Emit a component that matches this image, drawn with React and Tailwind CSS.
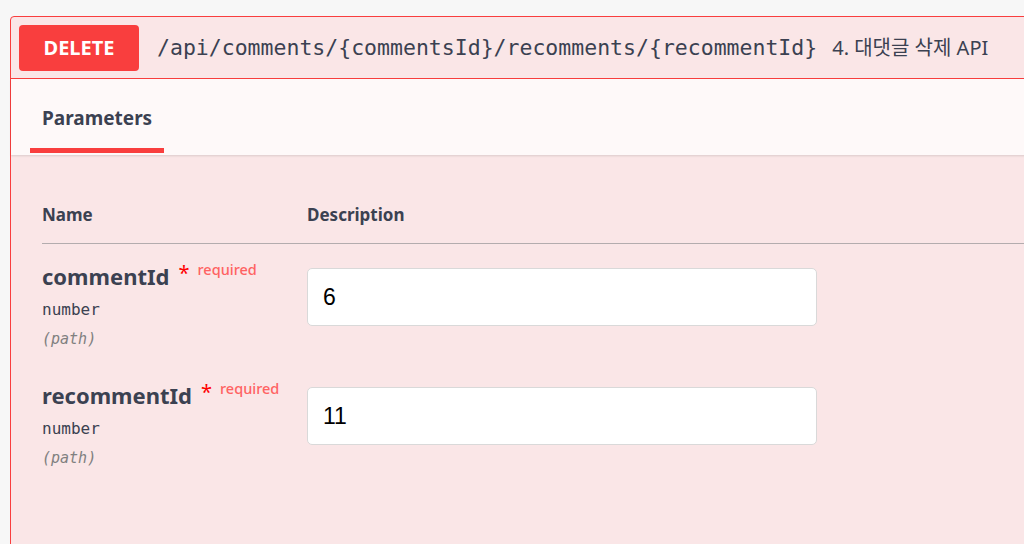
const sans = "font-['Noto_Sans','Noto_Sans_CJK_KR',sans-serif]";
const mono = "font-['DejaVu_Sans_Mono','Liberation_Mono',monospace]";

const params = [
  { name: "commentId", type: "number", place: "(path)", value: "6" },
  { name: "recommentId", type: "number", place: "(path)", value: "11" },
];

function ParamRow({ p }) {
  return (
    <div className="flex h-[119px]">
      <div className="w-[265px] shrink-0 flex flex-col">
        <div className="flex items-start">
          <span className={`${sans} text-[22px] leading-[28px] font-bold text-[#3b4151]`}>{p.name}</span>
          <span className={`${sans} ml-[9px] mt-[1px] text-[20px] leading-[20px] text-[#ff0000]`}>*</span>
          <span className={`${sans} ml-[8px] -mt-[3px] text-[14.5px] leading-[20px] font-medium text-[#ff6262]`}>required</span>
        </div>
        <div className={`${mono} mt-[10px] text-[16px] leading-[20px] text-[#3b4151]`}>{p.type}</div>
        <div className={`${mono} mt-[9px] text-[15px] leading-[20px] italic text-[#808080]`}>{p.place}</div>
      </div>
      <div className="pt-[6px]">
        <div className="w-[510px] h-[58px] bg-white border border-[#d9d9d9] rounded-[5px] flex items-center px-[15px]">
          <span className="font-['Liberation_Sans',Arial,sans-serif] text-[23px] text-black">{p.value}</span>
        </div>
      </div>
    </div>
  );
}

export default function App() {
  return (
    <div className="w-[1024px] h-[544px] overflow-hidden bg-[#f7f7f7] pt-[16px] pl-[10px]">
      <div className="w-[1030px] h-[540px] bg-[#fae6e7] border border-[#f93e3e] rounded-tl-[4px] flex flex-col">
        {/* 헤더 */}
        <div className="flex items-center h-[62px] px-[8px] pt-[1px] border-b border-[#f93e3e]">
          <div className={`${sans} w-[120px] h-[46px] rounded-[4px] bg-[#f93e3e] flex items-center justify-center text-white font-bold text-[20px]`}>
            DELETE
          </div>
          <span className={`${mono} ml-[18px] text-[21.5px] text-[#3b4151] whitespace-nowrap`}>
            /api/comments/{"{"}commentsId{"}"}/recomments/{"{"}recommentId{"}"}
          </span>
          <span className={`${sans} ml-[15px] text-[20px] text-[#3b4151] whitespace-nowrap`}>4. 대댓글 삭제 API</span>
        </div>

        {/* 탭 */}
        <div className="h-[76px] bg-[#fef9f9] shadow-[0_1px_2px_rgba(0,0,0,0.12)] px-[19px] flex items-end">
          <div className="flex flex-col mb-[2px]">
            <div className={`${sans} px-[12px] pt-[25px] text-[19px] leading-[26px] font-bold text-[#3b4151]`}>Parameters</div>
            <div className="mt-[17px] h-[5px] bg-[#f93e3e]" />
          </div>
        </div>

        {/* 파라미터 표 */}
        <div className="pl-[31px] pt-[49px]">
          <div className="flex h-[40px] border-b border-[#b3acae]">
            <div className={`${sans} w-[265px] text-[17px] leading-[22px] font-bold text-[#3b4151]`}>Name</div>
            <div className={`${sans} text-[17px] leading-[22px] font-bold text-[#3b4151]`}>Description</div>
          </div>
          <div className="pt-[18px]">
            {params.map((p) => (
              <ParamRow key={p.name} p={p} />
            ))}
          </div>
        </div>
      </div>
    </div>
  );
}
